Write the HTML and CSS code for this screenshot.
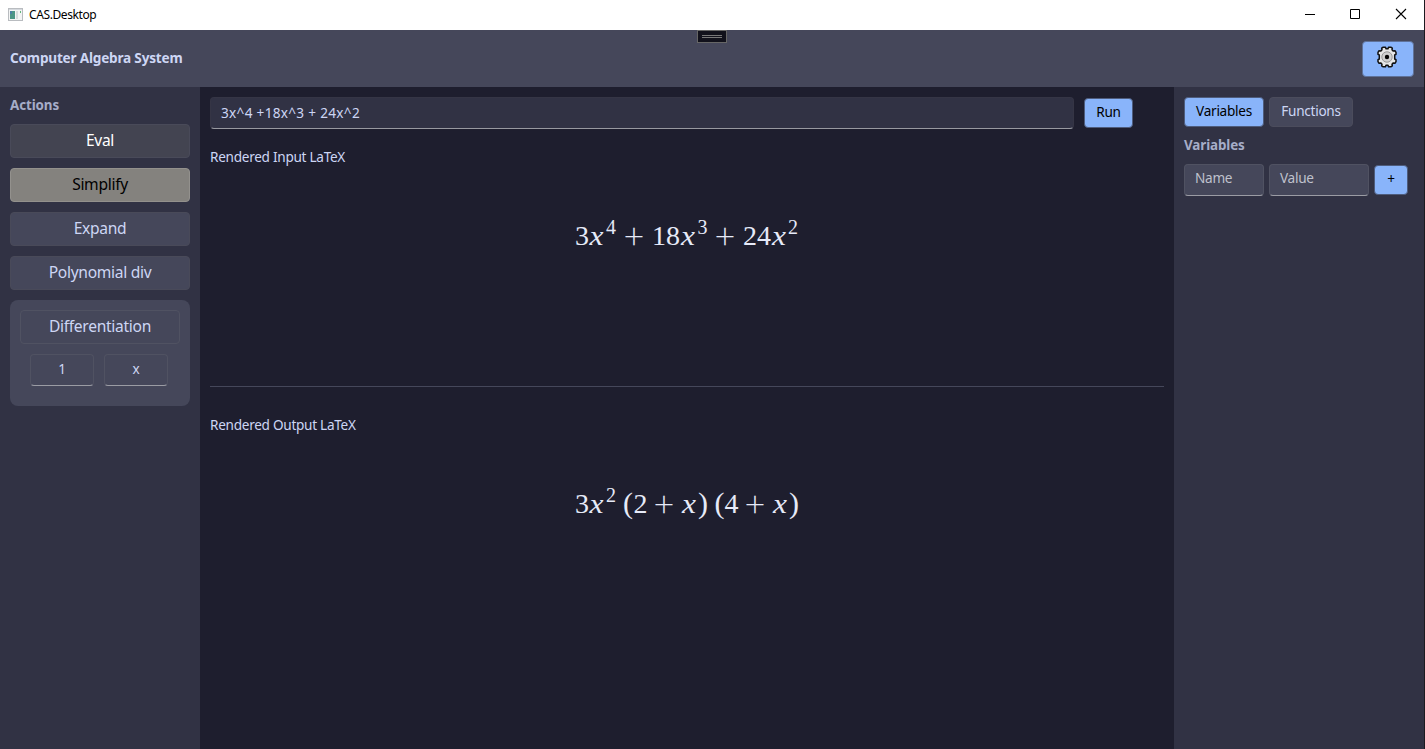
FILE: index.html
```html
<!DOCTYPE html>
<html lang="en">
<head>
<meta charset="utf-8">
<title>CAS.Desktop</title>
<link rel="stylesheet" href="styles.css">
</head>
<body>
<div class="window">
  <header class="titlebar">
    <svg class="app-icon" width="15" height="13" viewBox="0 0 15 13"><rect x=".5" y=".5" width="14" height="12" fill="#f3f4f4" stroke="#b9bcc0"/><path d="M1 1h13v1H1z" fill="#d5d9de"/><rect x="2" y="3" width="5" height="8" fill="#4d9686"/><path d="M2 3h2v3H2z" fill="#4d80a4"/><rect x="8" y="3" width="2" height="8" fill="#d7dcdd"/><path d="M12 3h1v2h-1z" fill="#62b57b"/></svg>
    <span class="app-name">CAS.Desktop</span>
    <svg class="controls" width="104" height="12" viewBox="0 0 104 12" fill="none" stroke="#000"><path d="M1 6.500h10M46.500 1.500h9v9h-9z"/><path d="M92 1l10 10M102 1L92 11" stroke-width="1.100"/></svg>
  </header>
  <div class="header">
    <h1 class="heading">Computer Algebra System</h1>
    <button class="settings" aria-label="Settings"><svg width="24" height="24" viewBox="0 0 24 24"><path d="M8.200 2.200h2.300L11 3.700h2l.5-1.500h2.300l1.500 1-.3 1.600 1.300 1.300 1.800-.3.900 1.500v2L19.700 10v4l1.300.7v2l-.9 1.500-1.800-.3-1.300 1.300.3 1.600-1.500 1h-2.300l-.5-1.500h-2l-.5 1.500H8.200l-1.500-1 .3-1.600-1.300-1.300-1.800.3-.9-1.500v-2l1.300-.7v-4L3 9.300v-2l.9-1.500 1.800.3L7 4.800l-.3-1.600z" fill="#e6e6e6" stroke="#111" stroke-width="1.500" stroke-linejoin="round"/><circle cx="12" cy="12" r="5.200" fill="#d0d0d0" stroke="#999"/><circle cx="12" cy="12" r="2.200" fill="#050505"/></svg></button>
    <div class="grip"><i></i><i></i></div>
  </div>
  <div class="body">
    <aside class="actions">
      <h2 class="label">Actions</h2>
      <button class="action eval">Eval</button>
      <button class="action simplify">Simplify</button>
      <button class="action">Expand</button>
      <button class="action">Polynomial div</button>
      <div class="group">
        <button class="action diff">Differentiation</button>
        <div class="params"><div class="field">1</div><div class="field">x</div></div>
      </div>
    </aside>
    <main class="main">
      <div class="entry"><div class="field expression">3x^4 +18x^3 + 24x^2</div><button class="small primary run">Run</button></div>
      <section class="panel input">
        <p class="caption">Rendered Input LaTeX</p>
        <svg class="formula" width="230" height="44" viewBox="0 0 230 44">
          <text x="2" y="31">3</text><text class="var" x="16.500" y="31" textLength="14" lengthAdjust="spacingAndGlyphs">x</text><text class="sup" x="33" y="19.500">4</text>
          <text class="op" x="50.500" y="35">+</text><text x="79" y="31">18</text><text class="var" x="108" y="31" textLength="14" lengthAdjust="spacingAndGlyphs">x</text><text class="sup" x="124.500" y="19.500">3</text>
          <text class="op" x="141.500" y="35">+</text><text x="170" y="31">24</text><text class="var" x="199" y="31" textLength="14" lengthAdjust="spacingAndGlyphs">x</text><text class="sup" x="215" y="19.500">2</text>
        </svg>
      </section>
      <section class="panel output">
        <p class="caption">Rendered Output LaTeX</p>
        <svg class="formula" width="230" height="44" viewBox="0 0 230 44">
          <text x="2" y="31">3</text><text class="var" x="16.500" y="31" textLength="14" lengthAdjust="spacingAndGlyphs">x</text><text class="sup" x="33" y="19.500">2</text>
          <text class="paren" x="50" y="31">(</text><text x="60.500" y="31">2</text><text class="op" x="80.500" y="35">+</text><text class="var" x="109" y="31" textLength="14" lengthAdjust="spacingAndGlyphs">x</text><text class="paren" x="125" y="31">)</text>
          <text class="paren" x="141.500" y="31">(</text><text x="151.500" y="31">4</text><text class="op" x="171.500" y="35">+</text><text class="var" x="200" y="31" textLength="14" lengthAdjust="spacingAndGlyphs">x</text><text class="paren" x="216" y="31">)</text>
        </svg>
      </section>
    </main>
    <aside class="symbols">
      <nav class="tabs"><button class="small primary tab-vars">Variables</button><button class="small tab-funcs">Functions</button></nav>
      <h2 class="label">Variables</h2>
      <div class="new-var"><div class="field name">Name</div><div class="field value">Value</div><button class="small primary add">+</button></div>
    </aside>
  </div>
</div>
</body>
</html>
```
FILE: styles.css
```css
* { box-sizing: border-box; }
body { margin: 0; background: #1e1e2e; color: #cdd6f4; font: 13.6px/18px "Noto Sans", "Open Sans", sans-serif; letter-spacing: -.28px; }
button { font: inherit; color: inherit; padding: 0; letter-spacing: inherit; }
h1, h2, p { margin: 0; }
.window { width: 1425px; height: 749px; display: flex; flex-direction: column; border-right: 1px solid #1c1a20; overflow: hidden; }
.titlebar { height: 30px; flex: none; background: #fff; color: #000; display: flex; align-items: center; padding: 0 16px 2px 8px; }
.app-name { margin: 1px 0 0 6px; font-size: 12px; letter-spacing: -.4px; }
.controls { margin-left: auto; }
.header { height: 57px; flex: none; background: #45475a; display: flex; align-items: center; justify-content: space-between; padding: 0 10px; position: relative; }
.heading { font-size: 13.6px; line-height: 18px; font-weight: 700; letter-spacing: -.2px; padding-bottom: 2px; }
.settings { width: 52px; height: 36px; background: #89b4fa; border: 1px solid #5f7299; border-radius: 4px; display: grid; place-items: center; padding: 0 2px 3px 0; }
.grip { position: absolute; left: 697px; top: 0; width: 30px; height: 13px; border: 1px solid #666; background: #11111b; display: flex; flex-direction: column; gap: 1px; padding: 4px 4px; }
.grip i { height: 1px; background: #777; }
.body { flex: 1; display: flex; min-height: 0; }
.actions { width: 200px; background: #313244; padding: 10px; display: flex; flex-direction: column; gap: 10px; }
.label { font-size: 13.4px; line-height: 17px; font-weight: 700; color: #a6adc8; letter-spacing: -.1px; }
.action { height: 34px; flex: none; font-size: 15.6px; line-height: 20px; letter-spacing: -.3px; padding-bottom: 2px; background: #45475a; border: 1px solid #494a59; border-radius: 4px; }
.eval { background: #434451; color: #fff; }
.simplify { background: #84827e; border-color: #93918d; color: #000; }
.group { height: 106px; border-radius: 8px; background: #45475a; padding: 10px; }
.diff { width: 160px; border-color: #505262; }
.params { display: flex; gap: 10px; padding: 10px; }
.field { height: 32px; border: 1px solid #505262; border-bottom-color: #9b9ca4; border-radius: 4px; background: #45475a; line-height: 26px; }
.params .field { width: 64px; text-align: center; line-height: 28px; }
.main { flex: 1; padding: 10px; display: flex; flex-direction: column; }
.entry { display: flex; align-items: center; gap: 10px; }
.expression { width: 864px; padding-left: 10px; background: #313244; border-color: #353545; border-bottom-color: #9899a0; line-height: 30px; letter-spacing: .3px; }
.small { height: 30px; border: 1px solid #4b4c5c; border-radius: 4px; background: #45475a; line-height: 26px; padding-bottom: 2px; }
.primary { background: #89b4fa; border-color: #4e5c7c; color: #000; }
.run { width: 49px; }
.panel { display: flex; flex-direction: column; }
.input { height: 258px; border-bottom: 1px solid #45475a; padding-top: 19px; }
.output { padding-top: 29px; }
.caption { height: 18px; }
.formula { margin: 48px 0 0 363px; fill: #e6eaf8; font: 28px "Liberation Serif", serif; letter-spacing: 0; }
.var { font-style: italic; }
.sup { font-size: 20px; }
.op { font: 300 36px Lato, sans-serif; }
.paren { font-size: 30px; }
.symbols { width: 250px; background: #313244; padding: 10px; }
.tabs { display: flex; gap: 5px; margin-bottom: 10px; }
.tab-vars { width: 80px; }
.tab-funcs { width: 84px; }
.new-var { display: flex; gap: 5px; align-items: center; margin-top: 10px; }
.new-var .field { color: #bfc1cc; padding-left: 10px; }
.name { width: 80px; }
.value { width: 100px; }
.add { width: 34px; }
```
